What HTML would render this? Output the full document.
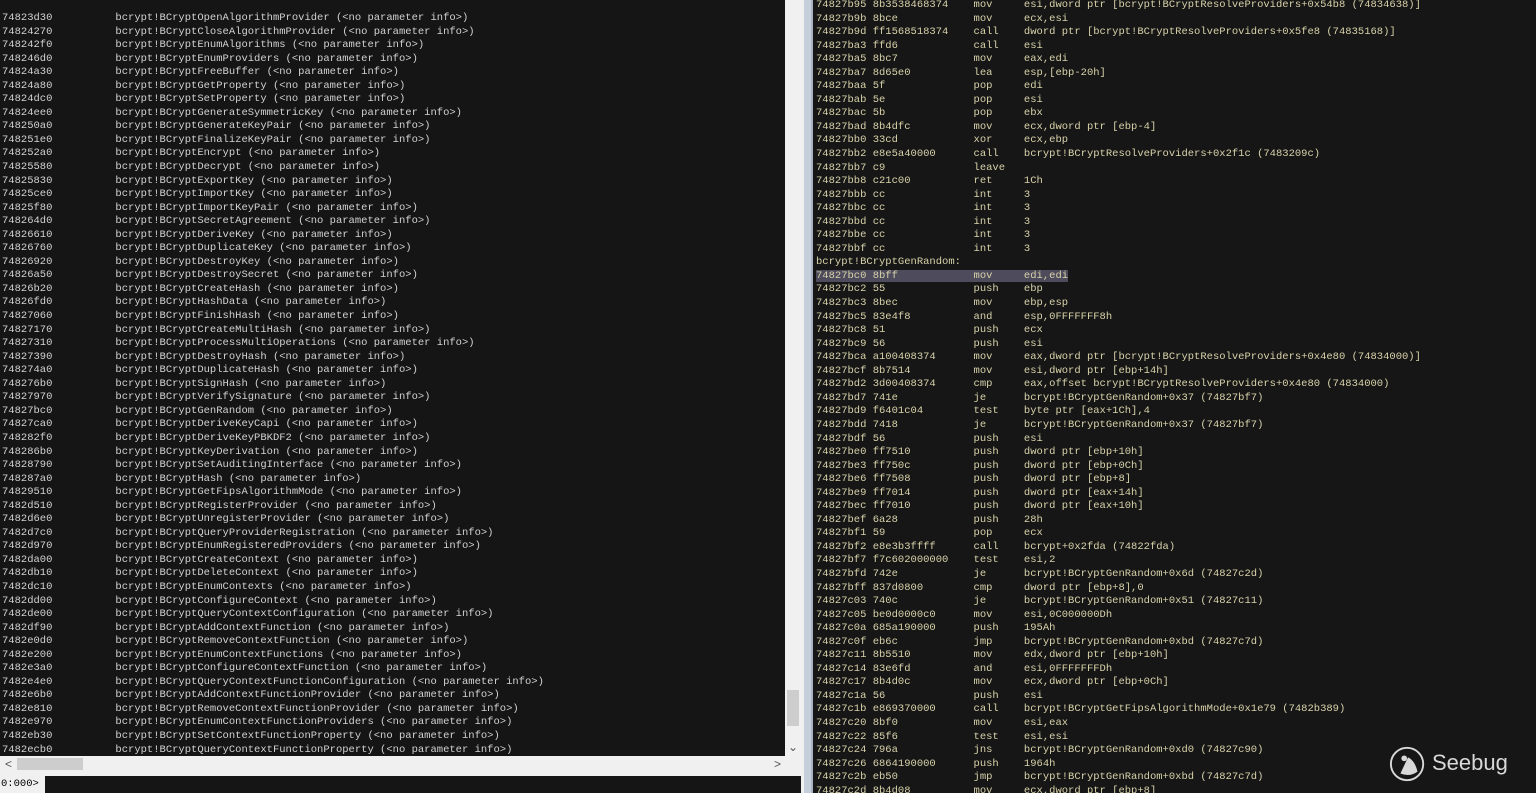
<!DOCTYPE html>
<html><head><meta charset="utf-8"><style>
*{margin:0;padding:0;box-sizing:border-box}
body{width:1536px;height:793px;overflow:hidden;background:#f0f0f0;position:relative;font-family:"Liberation Mono",monospace}
pre{font-family:"Liberation Mono",monospace;font-size:10.5px;line-height:13.54px;white-space:pre}
#left{position:absolute;left:0;top:0;width:785px;height:756px;background:#151515;overflow:hidden}
#left pre{position:absolute;left:2px;top:12px;color:#d2d2d2}
#vs{position:absolute;left:785px;top:0;width:16px;height:756px;background:#f0f0f0}
#vthumb{position:absolute;left:787px;top:690px;width:12px;height:36px;background:#cdcdcd}
#hs{position:absolute;left:0;top:756px;width:801px;height:16px;background:#f0f0f0}
#hthumb{position:absolute;left:17px;top:758px;width:66px;height:12px;background:#cdcdcd}
#sep{position:absolute;left:801px;top:0;width:12px;height:793px;background:#c5cedb;border-left:3px solid #f0f0f0;border-right:2px solid #a8b2c2}
#cmdl{position:absolute;left:0;top:776px;width:42px;height:17px;background:#f0f0f0;font-size:10.5px;line-height:17px;color:#000;padding-left:1px}
#cmd{position:absolute;left:45px;top:776px;width:756px;height:17px;background:#151515}
#right{position:absolute;left:813px;top:0;width:723px;height:793px;background:#161616;overflow:hidden}
#right pre{position:absolute;left:3px;top:-1px;color:#d8d2aa}
.hl{background:#4e4c5c}
.arr{position:absolute;color:#555;font-family:"Liberation Sans",sans-serif;font-size:12px}
</style></head><body>
<div id="left"><pre>74823d30          bcrypt!BCryptOpenAlgorithmProvider (&lt;no parameter info&gt;)
74824270          bcrypt!BCryptCloseAlgorithmProvider (&lt;no parameter info&gt;)
748242f0          bcrypt!BCryptEnumAlgorithms (&lt;no parameter info&gt;)
748246d0          bcrypt!BCryptEnumProviders (&lt;no parameter info&gt;)
74824a30          bcrypt!BCryptFreeBuffer (&lt;no parameter info&gt;)
74824a80          bcrypt!BCryptGetProperty (&lt;no parameter info&gt;)
74824dc0          bcrypt!BCryptSetProperty (&lt;no parameter info&gt;)
74824ee0          bcrypt!BCryptGenerateSymmetricKey (&lt;no parameter info&gt;)
748250a0          bcrypt!BCryptGenerateKeyPair (&lt;no parameter info&gt;)
748251e0          bcrypt!BCryptFinalizeKeyPair (&lt;no parameter info&gt;)
748252a0          bcrypt!BCryptEncrypt (&lt;no parameter info&gt;)
74825580          bcrypt!BCryptDecrypt (&lt;no parameter info&gt;)
74825830          bcrypt!BCryptExportKey (&lt;no parameter info&gt;)
74825ce0          bcrypt!BCryptImportKey (&lt;no parameter info&gt;)
74825f80          bcrypt!BCryptImportKeyPair (&lt;no parameter info&gt;)
748264d0          bcrypt!BCryptSecretAgreement (&lt;no parameter info&gt;)
74826610          bcrypt!BCryptDeriveKey (&lt;no parameter info&gt;)
74826760          bcrypt!BCryptDuplicateKey (&lt;no parameter info&gt;)
74826920          bcrypt!BCryptDestroyKey (&lt;no parameter info&gt;)
74826a50          bcrypt!BCryptDestroySecret (&lt;no parameter info&gt;)
74826b20          bcrypt!BCryptCreateHash (&lt;no parameter info&gt;)
74826fd0          bcrypt!BCryptHashData (&lt;no parameter info&gt;)
74827060          bcrypt!BCryptFinishHash (&lt;no parameter info&gt;)
74827170          bcrypt!BCryptCreateMultiHash (&lt;no parameter info&gt;)
74827310          bcrypt!BCryptProcessMultiOperations (&lt;no parameter info&gt;)
74827390          bcrypt!BCryptDestroyHash (&lt;no parameter info&gt;)
748274a0          bcrypt!BCryptDuplicateHash (&lt;no parameter info&gt;)
748276b0          bcrypt!BCryptSignHash (&lt;no parameter info&gt;)
74827970          bcrypt!BCryptVerifySignature (&lt;no parameter info&gt;)
74827bc0          bcrypt!BCryptGenRandom (&lt;no parameter info&gt;)
74827ca0          bcrypt!BCryptDeriveKeyCapi (&lt;no parameter info&gt;)
748282f0          bcrypt!BCryptDeriveKeyPBKDF2 (&lt;no parameter info&gt;)
748286b0          bcrypt!BCryptKeyDerivation (&lt;no parameter info&gt;)
74828790          bcrypt!BCryptSetAuditingInterface (&lt;no parameter info&gt;)
748287a0          bcrypt!BCryptHash (&lt;no parameter info&gt;)
74829510          bcrypt!BCryptGetFipsAlgorithmMode (&lt;no parameter info&gt;)
7482d510          bcrypt!BCryptRegisterProvider (&lt;no parameter info&gt;)
7482d6e0          bcrypt!BCryptUnregisterProvider (&lt;no parameter info&gt;)
7482d7c0          bcrypt!BCryptQueryProviderRegistration (&lt;no parameter info&gt;)
7482d970          bcrypt!BCryptEnumRegisteredProviders (&lt;no parameter info&gt;)
7482da00          bcrypt!BCryptCreateContext (&lt;no parameter info&gt;)
7482db10          bcrypt!BCryptDeleteContext (&lt;no parameter info&gt;)
7482dc10          bcrypt!BCryptEnumContexts (&lt;no parameter info&gt;)
7482dd00          bcrypt!BCryptConfigureContext (&lt;no parameter info&gt;)
7482de00          bcrypt!BCryptQueryContextConfiguration (&lt;no parameter info&gt;)
7482df90          bcrypt!BCryptAddContextFunction (&lt;no parameter info&gt;)
7482e0d0          bcrypt!BCryptRemoveContextFunction (&lt;no parameter info&gt;)
7482e200          bcrypt!BCryptEnumContextFunctions (&lt;no parameter info&gt;)
7482e3a0          bcrypt!BCryptConfigureContextFunction (&lt;no parameter info&gt;)
7482e4e0          bcrypt!BCryptQueryContextFunctionConfiguration (&lt;no parameter info&gt;)
7482e6b0          bcrypt!BCryptAddContextFunctionProvider (&lt;no parameter info&gt;)
7482e810          bcrypt!BCryptRemoveContextFunctionProvider (&lt;no parameter info&gt;)
7482e970          bcrypt!BCryptEnumContextFunctionProviders (&lt;no parameter info&gt;)
7482eb30          bcrypt!BCryptSetContextFunctionProperty (&lt;no parameter info&gt;)
7482ecb0          bcrypt!BCryptQueryContextFunctionProperty (&lt;no parameter info&gt;)</pre></div>
<div id="vs"></div><div id="vthumb"></div>
<div class="arr" style="left:788px;top:740px">&#8964;</div>
<div id="hs"></div><div id="hthumb"></div>
<div class="arr" style="left:5px;top:757px">&lt;</div>
<div class="arr" style="left:774px;top:757px">&gt;</div>
<div id="sep"></div>
<div id="cmdl">0:000&gt;</div><div id="cmd"></div>
<div id="right"><pre>74827b95 8b3538468374    mov     esi,dword ptr [bcrypt!BCryptResolveProviders+0x54b8 (74834638)]
74827b9b 8bce            mov     ecx,esi
74827b9d ff1568518374    call    dword ptr [bcrypt!BCryptResolveProviders+0x5fe8 (74835168)]
74827ba3 ffd6            call    esi
74827ba5 8bc7            mov     eax,edi
74827ba7 8d65e0          lea     esp,[ebp-20h]
74827baa 5f              pop     edi
74827bab 5e              pop     esi
74827bac 5b              pop     ebx
74827bad 8b4dfc          mov     ecx,dword ptr [ebp-4]
74827bb0 33cd            xor     ecx,ebp
74827bb2 e8e5a40000      call    bcrypt!BCryptResolveProviders+0x2f1c (7483209c)
74827bb7 c9              leave
74827bb8 c21c00          ret     1Ch
74827bbb cc              int     3
74827bbc cc              int     3
74827bbd cc              int     3
74827bbe cc              int     3
74827bbf cc              int     3
bcrypt!BCryptGenRandom:
<span class="hl">74827bc0 8bff            mov     edi,edi</span>
74827bc2 55              push    ebp
74827bc3 8bec            mov     ebp,esp
74827bc5 83e4f8          and     esp,0FFFFFFF8h
74827bc8 51              push    ecx
74827bc9 56              push    esi
74827bca a100408374      mov     eax,dword ptr [bcrypt!BCryptResolveProviders+0x4e80 (74834000)]
74827bcf 8b7514          mov     esi,dword ptr [ebp+14h]
74827bd2 3d00408374      cmp     eax,offset bcrypt!BCryptResolveProviders+0x4e80 (74834000)
74827bd7 741e            je      bcrypt!BCryptGenRandom+0x37 (74827bf7)
74827bd9 f6401c04        test    byte ptr [eax+1Ch],4
74827bdd 7418            je      bcrypt!BCryptGenRandom+0x37 (74827bf7)
74827bdf 56              push    esi
74827be0 ff7510          push    dword ptr [ebp+10h]
74827be3 ff750c          push    dword ptr [ebp+0Ch]
74827be6 ff7508          push    dword ptr [ebp+8]
74827be9 ff7014          push    dword ptr [eax+14h]
74827bec ff7010          push    dword ptr [eax+10h]
74827bef 6a28            push    28h
74827bf1 59              pop     ecx
74827bf2 e8e3b3ffff      call    bcrypt+0x2fda (74822fda)
74827bf7 f7c602000000    test    esi,2
74827bfd 742e            je      bcrypt!BCryptGenRandom+0x6d (74827c2d)
74827bff 837d0800        cmp     dword ptr [ebp+8],0
74827c03 740c            je      bcrypt!BCryptGenRandom+0x51 (74827c11)
74827c05 be0d0000c0      mov     esi,0C000000Dh
74827c0a 685a190000      push    195Ah
74827c0f eb6c            jmp     bcrypt!BCryptGenRandom+0xbd (74827c7d)
74827c11 8b5510          mov     edx,dword ptr [ebp+10h]
74827c14 83e6fd          and     esi,0FFFFFFFDh
74827c17 8b4d0c          mov     ecx,dword ptr [ebp+0Ch]
74827c1a 56              push    esi
74827c1b e869370000      call    bcrypt!BCryptGetFipsAlgorithmMode+0x1e79 (7482b389)
74827c20 8bf0            mov     esi,eax
74827c22 85f6            test    esi,esi
74827c24 796a            jns     bcrypt!BCryptGenRandom+0xd0 (74827c90)
74827c26 6864190000      push    1964h
74827c2b eb50            jmp     bcrypt!BCryptGenRandom+0xbd (74827c7d)
74827c2d 8b4d08          mov     ecx,dword ptr [ebp+8]</pre>
<svg style="position:absolute;left:576px;top:745px" width="38" height="38" viewBox="0 0 40 40">
<circle cx="19" cy="20" r="17" fill="none" stroke="#d8d8d8" stroke-width="2"/>
<path d="M12 30 L20 13 Q27 16 30 28 Q22 34 12 30Z" fill="#d8d8d8"/>
<circle cx="16" cy="14" r="3" fill="#d8d8d8"/>
</svg>
<div style="position:absolute;left:619px;top:750px;font-family:'Liberation Sans',sans-serif;font-size:22px;color:#d8d8d8">Seebug</div>
</div>
</body></html>
